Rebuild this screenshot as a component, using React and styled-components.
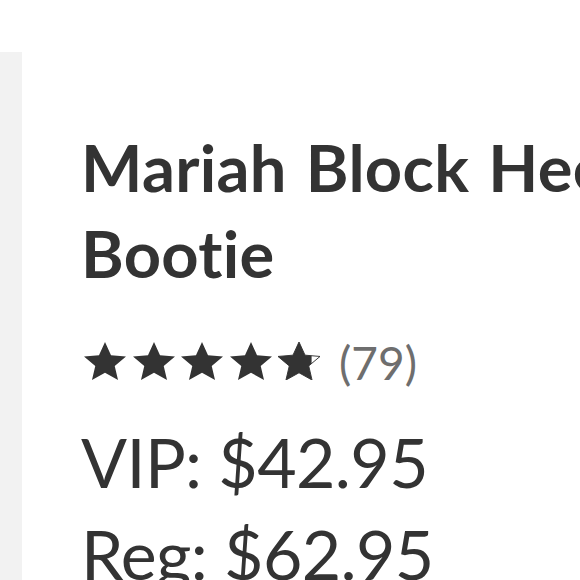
import React from 'react';
import styled, { createGlobalStyle } from 'styled-components';

const GlobalStyle = createGlobalStyle`
  html, body {
    margin: 0;
    padding: 0;
    background: #ffffff;
    overflow: hidden;
  }
  body {
    font-family: Lato, "Liberation Sans", sans-serif;
    color: #333333;
  }
`;

const Page = styled.div`
  display: flex;
  align-items: flex-start;
  width: 580px;
  height: 580px;
  overflow: hidden;
  padding-top: 52px;
  box-sizing: border-box;
`;

const Gallery = styled.div`
  flex: 0 0 22px;
  height: 600px;
  background: #f2f2f2;
`;

const Info = styled.div`
  flex: 0 0 640px;
  padding-left: 59px;
  padding-top: 72px;
`;

const Title = styled.h1`
  margin: 0;
  font-size: 65px;
  line-height: 86px;
  font-weight: 700;
  color: #333333;
  letter-spacing: 0.3px;
  word-spacing: 3px;
`;

const Rating = styled.div`
  display: flex;
  align-items: center;
  gap: 19px;
  margin-top: 45px;
  height: 40px;
`;

const Stars = styled.div`
  display: flex;
  gap: 6.5px;
  padding-left: 3px;
`;

const Count = styled.span`
  font-size: 46px;
  line-height: 40px;
  margin-top: 4px;
  color: #6e6e6e;
  font-weight: 400;
`;

const Price = styled.div`
  font-size: 68px;
  line-height: 92px;
  font-weight: 400;
  color: #333333;
  letter-spacing: -0.6px;
  margin-top: ${(p) => p.$top || 0}px;
`;

const STAR = 'M12 1l3.1 7.1 7.7.7-5.8 5.1 1.7 7.6L12 17.6l-6.7 3.9 1.7-7.6L1.2 8.8l7.7-.7z';

const Star = ({ fill = 1 }) => (
  <svg width="42" height="38" viewBox="1.2 1 21.6 20.5" preserveAspectRatio="none">
    <defs>
      <clipPath id={`clip${Math.round(fill * 100)}`}>
        <rect x="0" y="0" width={1.2 + 21.6 * fill} height="23" />
      </clipPath>
    </defs>
    <path d={STAR} fill="#333333" clipPath={`url(#clip${Math.round(fill * 100)})`} />
    {fill < 1 && <path d={STAR} fill="none" stroke="#333333" strokeWidth="0.5" />}
  </svg>
);

export default function App() {
  return (
    <>
      <GlobalStyle />
      <Page>
        <Gallery />
        <Info>
          <Title>Mariah Block Heel Bootie</Title>
          <Rating>
            <Stars>
              <Star />
              <Star />
              <Star />
              <Star />
              <Star fill={0.8} />
            </Stars>
            <Count>(79)</Count>
          </Rating>
          <Price $top={35}>VIP: $42.95</Price>
          <Price>Reg: $62.95</Price>
        </Info>
      </Page>
    </>
  );
}
